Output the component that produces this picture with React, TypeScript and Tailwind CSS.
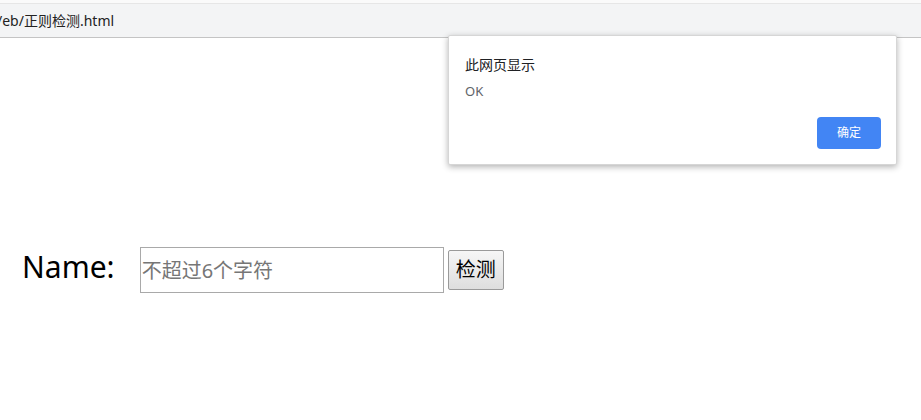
import React from "react";

const CJK = "font-['Noto_Sans','Noto_Sans_CJK_SC',sans-serif]";

export default function App() {
  return (
    <div className={`relative w-[921px] h-[420px] bg-white overflow-hidden ${CJK}`}>
      {/* Browser address strip */}
      <div className="h-[4px] bg-[#fafafa] border-b border-[#e6e6e6]" />
      <div className="h-[34px] bg-[#f3f4f5] border-b border-[#c4c4c4] flex items-center text-[14px] leading-none text-[#222] -ml-[3px]">
        /eb/正则检测.html
      </div>

      {/* Page content */}
      <div className="flex items-center pt-[209px] pl-[22px]">
        <span className="text-[30px] leading-none text-black mr-[25px] pb-[6px]">Name:</span>
        <input
          placeholder="不超过6个字符"
          className="w-[304px] h-[46px] border border-[#a9a9a9] px-[1px] text-[20px] text-black placeholder:text-[#767676] outline-none"
        />
        <button className="ml-[4px] w-[56px] h-[40px] border border-[#9a9a9a] rounded-[2px] bg-gradient-to-b from-[#f6f6f6] to-[#dedede] text-[20px] leading-none text-black">
          检测
        </button>
      </div>

      {/* Alert dialog */}
      <div className="absolute left-[448px] top-[35px] w-[449px] h-[130px] bg-white rounded-[2px] border border-[#d6d6d6] shadow-[0_2px_6px_rgba(0,0,0,0.3)] flex flex-col pl-[16px] pr-[15px] pt-[19px]">
        <div className="text-[14px] leading-[20px] text-[#202124]">此网页显示</div>
        <div className="mt-[7px] text-[13px] leading-[18px] text-[#5f6368]">OK</div>
        <div className="flex justify-end mt-[17px]">
          <button className="w-[64px] h-[32px] rounded-[4px] bg-[#4285f4] text-white text-[12px] leading-none">
            确定
          </button>
        </div>
      </div>
    </div>
  );
}
